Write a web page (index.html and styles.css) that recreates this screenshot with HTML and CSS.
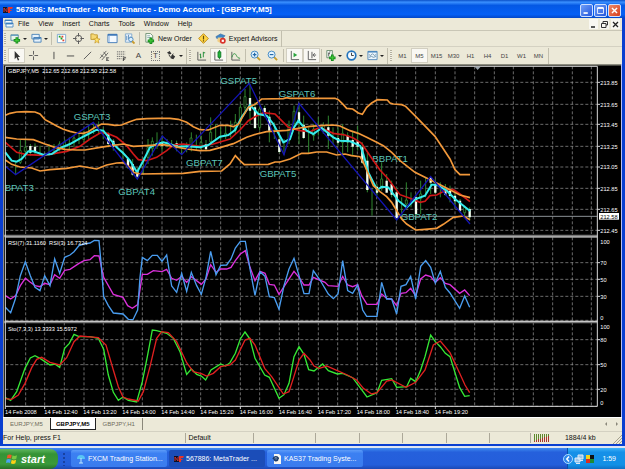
FILE: index.html
```html
<!DOCTYPE html>
<html lang="en">
<head>
<meta charset="utf-8">
<title>567886: MetaTrader - North Finance - Demo Account - [GBPJPY,M5]</title>
<link rel="stylesheet" href="styles.css">
</head>
<body>
<div class="window">
  <header class="titlebar">
    <svg class="logo" viewBox="0 0 10 8"><path d="M0 1h4l2 6H0z" fill="#101828"/><path d="M1 6V2l3 4V2" stroke="#c33" fill="none"/><path d="M5 1h5L9 3H7v1h2L8 5H7v2H5z" fill="#e8352a"/></svg>
    <h1>567886: MetaTrader - North Finance - Demo Account - [GBPJPY,M5]</h1>
    <div class="winbtns">
      <button aria-label="Minimize"><svg viewBox="0 0 13 13"><path d="M3 9.500h5" stroke="#fff" stroke-width="2"/></svg></button>
      <button aria-label="Maximize"><svg viewBox="0 0 13 13"><path d="M3 3.500h7V10H3z" stroke="#fff" fill="none"/><path d="M3 3.500h7" stroke="#fff" stroke-width="2"/></svg></button>
      <button class="close" aria-label="Close"><svg viewBox="0 0 13 13"><path d="M3.500 3.500l6 6m0-6l-6 6" stroke="#fff" stroke-width="1.700"/></svg></button>
    </div>
  </header>
  <div class="client">
    <nav class="menu">
      <svg class="doc" viewBox="0 0 10 10"><path d="M1 1h7v4H1z M2 4h7v4H2z" fill="#f4faff" stroke="#5b94c8"/><path d="M1 1.500h7M2 4.500h7" stroke="#3c7ec0"/></svg>
      <button>File</button><button>View</button><button>Insert</button><button>Charts</button><button>Tools</button><button>Window</button><button>Help</button>
      <div class="mdi">
        <button aria-label="Minimize chart"><svg viewBox="0 0 9 9"><path d="M2 7h4" stroke="#222" stroke-width="1.500"/></svg></button>
        <button aria-label="Restore chart"><svg viewBox="0 0 9 9"><path d="M3 3V1.500h4.500V5H6M1.500 3.500H6v4H1.500z" stroke="#333" fill="none"/></svg></button>
        <button aria-label="Close chart"><svg viewBox="0 0 9 9"><path d="M2 2l5 5m0-5L2 7" stroke="#222" stroke-width="1.300"/></svg></button>
      </div>
    </nav>
    <div class="toolbar first">
      <i class="grip"></i>
      <button class="dd" aria-label="New chart"><svg viewBox="0 0 12 12"><path d="M1 2h8v6H1z" fill="#e9f4ea" stroke="#5b8f9f"/><path d="M1 2.500h8" stroke="#4d8fc0"/><path d="M7.500 4.500v7M4 8h7" stroke="#168c1d" stroke-width="3"/><path d="M7.500 5.500v5M5 8h5" stroke="#46d13a"/></svg><b></b></button>
      <button class="dd" aria-label="Profiles"><svg viewBox="0 0 12 12"><path d="M1 1.500h8v5H1zM3 5h8v5H3z" fill="#e6f2fb" stroke="#4c84ba"/><path d="M3 5.500h8" stroke="#2d6fb0"/></svg><b></b></button>
      <i class="sep"></i>
      <button aria-label="Market watch"><svg viewBox="0 0 12 12"><path d="M1.500 1.500h9v9h-9z" fill="#fff" stroke="#7fa9cf"/><path d="M3 3h2v2H3zM5 5h2v2H5z" fill="#20a020"/><path d="M6 3h2v2H6zM7 7h2v2H7z" fill="#dc4a35"/></svg></button>
      <button aria-label="Data window"><svg viewBox="0 0 12 12"><circle cx="6" cy="6" r="3.500" fill="none" stroke="#555"/><path d="M6 0v4M6 8v4M0 6h4M8 6h4" stroke="#555"/></svg></button>
      <button aria-label="Navigator"><svg viewBox="0 0 12 12"><path d="M1 1h3l1 1h3v5H1z" fill="#f6d873" stroke="#c09a35"/><path d="M7.500 4l1 2.300 2.500.3-2 1.500.7 2.900-2.200-1.500L5.300 11 6 8.100l-2-1.500 2.500-.3z" fill="#ffe26a" stroke="#c29220" stroke-width=".7"/></svg></button>
      <button aria-label="Terminal"><svg viewBox="0 0 12 12"><path d="M1 1.500h10v9H1z" fill="#f4f9ff" stroke="#3f78b8"/><path d="M1 2h10" stroke="#3f78b8" stroke-width="2"/><path d="M2.500 3v7" stroke="#9bc0e8"/></svg></button>
      <button aria-label="Strategy tester"><svg viewBox="0 0 12 12"><path d="M1.500 1h7v9h-7z" fill="#f2f8ff" stroke="#7ca6cc"/><path d="M3 3v5M5 2v5M7 4v3" stroke="#5589b9"/><circle cx="7.500" cy="7" r="2.400" fill="#d9efff" stroke="#4d88bd"/><path d="M9 9l2.500 2.500" stroke="#c89a2c" stroke-width="2"/></svg></button>
      <i class="sep"></i>
      <button class="wide order"><svg viewBox="0 0 12 12"><path d="M2 .5h5l2.500 2.500v7H2z" fill="#f7faf7" stroke="#6f8f73"/><path d="M3.500 3h3M3.500 5h4" stroke="#8aa"/><path d="M7.500 5v7M4 8.500h7" stroke="#168c1d" stroke-width="3"/><path d="M7.500 6v5M5 8.500h5" stroke="#46d13a"/></svg>New Order</button>
      <button aria-label="Metaeditor"><svg viewBox="0 0 12 12"><path d="M6 .7L11.300 6 6 11.300.7 6z" fill="#ffd545" stroke="#bd8a13"/><path d="M6 3v4M6 8v1.300" stroke="#5f4a0c" stroke-width="1.300"/></svg></button>
      <button class="wide advisors"><svg viewBox="0 0 12 12"><path d="M1 4l5-3 5 2-3 3H2z" fill="#3d86c7" stroke="#2b5f9a" stroke-width=".6"/><path d="M3 5h5v4l-3 1.500L2.500 9z" fill="#f0cf86"/><circle cx="8.500" cy="8.500" r="3.200" fill="#d9322a"/><path d="M7.300 7.300h2.400v2.400H7.300z" fill="#fff"/></svg>Expert Advisors</button>
      <i class="sep end"></i>
    </div>
    <div class="toolbar">
      <i class="grip"></i>
      <button class="on" aria-label="Cursor"><svg viewBox="0 0 12 12"><path d="M4 1v9l2-2 1.500 3.500L9 11 7.500 7.500H10z" fill="#333"/></svg></button>
      <button aria-label="Crosshair"><svg viewBox="0 0 12 12"><path d="M6 1v4M6 7v4M1 6h4M7 6h4" stroke="#555"/></svg></button>
      <i class="sep clear"></i>
      <button aria-label="Vertical line"><svg viewBox="0 0 12 12"><path d="M6.500 2v8" stroke="#444"/></svg></button>
      <button aria-label="Horizontal line"><svg viewBox="0 0 12 12"><path d="M2 6.500h8" stroke="#444"/></svg></button>
      <button aria-label="Trendline"><svg viewBox="0 0 12 12"><path d="M2 10l8-8" stroke="#555"/></svg></button>
      <button aria-label="Equidistant channel"><svg viewBox="0 0 12 12"><path d="M1 9l7-8M3 11l7-8M2 5l3 3M5 2l3 4M8 8.500h3M8 10h2M8 11.500h3M8.500 8v4" stroke="#444" fill="none" stroke-width=".8"/></svg></button>
      <button aria-label="Fibonacci retracement"><svg viewBox="0 0 12 12"><path d="M1 2h9M1 4.500h9M1 7h9M1 9.500h5" stroke="#666" stroke-dasharray="1.500 .7"/><path d="M8 12V8.500h3M8 10h2" stroke="#333" fill="none"/></svg></button>
      <button class="glyph">A</button>
      <button class="glyph boxed" aria-label="Text label"><span>T</span></button>
      <button class="dd" aria-label="Arrows"><svg viewBox="0 0 12 12"><path d="M1 3l3-2 2 3-2 1zM7 5l3 2-2 3-3-1z" fill="#333"/><path d="M3 5l2 3 3-4" stroke="#333" fill="none"/></svg><b></b></button>
      <i class="sep end"></i><i class="grip"></i>
      <button aria-label="Bar chart"><svg viewBox="0 0 12 12"><path d="M2 2v9h9" stroke="#555" fill="none"/><path d="M5 4v5M8 2v6M4 5h1M8 3h2M5 8h1" stroke="#1e8a35"/></svg></button>
      <button class="on" aria-label="Candlesticks"><svg viewBox="0 0 12 12"><path d="M2 2v9h9" stroke="#555" fill="none"/><path d="M7 0v10" stroke="#107a25"/><path d="M5.500 2h3v6h-3z" fill="#22b838" stroke="#107a25"/></svg></button>
      <button aria-label="Line chart"><svg viewBox="0 0 12 12"><path d="M2 2v9h9" stroke="#555" fill="none"/><path d="M2 8c2-6 4-4 5-2s2 3 4 3" stroke="#2d913e" fill="none"/></svg></button>
      <i class="sep"></i>
      <button aria-label="Zoom in"><svg viewBox="0 0 12 12"><path d="M7.500 7.500l3.500 3.500" stroke="#c99d28" stroke-width="2"/><circle cx="5" cy="5" r="3.800" fill="#e3f4ff" stroke="#3b83c0"/><path d="M3 5h4M5 3v4" stroke="#2369a8" stroke-width="1.300"/></svg></button>
      <button aria-label="Zoom out"><svg viewBox="0 0 12 12"><path d="M7.500 7.500l3.500 3.500" stroke="#c99d28" stroke-width="2"/><circle cx="5" cy="5" r="3.800" fill="#e3f4ff" stroke="#3b83c0"/><path d="M3 5h4" stroke="#2369a8" stroke-width="1.300"/></svg></button>
      <i class="sep wider"></i>
      <button class="on" aria-label="Auto scroll"><svg viewBox="0 0 12 12"><path d="M2.500 1v9.500H11" stroke="#555" fill="none"/><path d="M5 3l4 2.500L5 8z" fill="#29a33c"/></svg></button>
      <button class="on" aria-label="Chart shift"><svg viewBox="0 0 12 12"><path d="M2.500 1v9.500H11M6.500 2v7M8 5.500h3M9.500 3.500L7.500 5.500l2 2" stroke="#555" fill="none"/></svg></button>
      <i class="sep"></i>
      <button class="dd" aria-label="Indicators"><svg viewBox="0 0 12 12"><path d="M2 .5h6v8H2z" fill="#f7faf7" stroke="#668a6c"/><path d="M6 2c-2 0-2 1-2 5M3.500 4h2" stroke="#555" fill="none"/><path d="M8 5v7M4.500 8.500h7" stroke="#168c1d" stroke-width="3"/><path d="M8 6v5M5.500 8.500h5" stroke="#46d13a"/></svg><b></b></button>
      <button class="dd" aria-label="Periods"><svg viewBox="0 0 12 12"><circle cx="6" cy="6" r="4.700" fill="#f5fbff" stroke="#2474bd" stroke-width="1.800"/><path d="M6 3v3h2.500" stroke="#333" fill="none"/></svg><b></b></button>
      <button class="dd" aria-label="Templates"><svg viewBox="0 0 12 12"><path d="M1 1.500h10v9H1z" fill="#edf6fd" stroke="#5288b8"/><path d="M1 2h10" stroke="#4584be" stroke-width="1.500"/><path d="M2 5l2 1 2-2 2 2 2-1M2 8l3-1 2 1 3-1" stroke="#6a91aa" fill="none"/></svg><b></b></button>
      <i class="sep end"></i><i class="grip"></i>
      <button class="period">M1</button><button class="period on">M5</button><button class="period">M15</button><button class="period">M30</button><button class="period">H1</button><button class="period">H4</button><button class="period">D1</button><button class="period">W1</button><button class="period">MN</button>
      <i class="sep end"></i>
    </div>

    <main class="chart">
      <!-- three drawing units per pixel -->
      <svg viewBox="12 192 1851 1059" role="img" aria-label="GBPJPY five minute chart">
        <g class="grid">
          <path d="M77 199V702M134 199V702M193 199V702M252 199V702M310 199V702M369 199V702M427 199V702M486 199V702M545 199V702M602 199V702M662 199V702M721 199V702M779 199V702M838 199V702M896 199V702M955 199V702M1013 199V702M1072 199V702M1130 199V702M1189 199V702M1247 199V702M1306 199V702M1365 199V702M1424 199V702M1483 199V702M1540 199V702M1600 199V702M1658 199V702M1717 199V702M1774 199V702"/>
          <path d="M77 712V1218M134 712V1218M193 712V1218M252 712V1218M310 712V1218M369 712V1218M427 712V1218M486 712V1218M545 712V1218M602 712V1218M662 712V1218M721 712V1218M779 712V1218M838 712V1218M896 712V1218M955 712V1218M1013 712V1218M1072 712V1218M1130 712V1218M1189 712V1218M1247 712V1218M1306 712V1218M1365 712V1218M1424 712V1218M1483 712V1218M1540 712V1218M1600 712V1218M1658 712V1218M1717 712V1218M1774 712V1218"/>
          <path d="M16 247H1792M16 313H1792M16 373H1792M16 439H1792M16 501H1792M16 565H1792M16 628H1792M16 691H1792M16 788H1792M16 838H1792M16 889H1792M16 961H1792M16 1019H1792M16 1094H1792M16 1168H1792M16 1219H1792"/>
        </g>
        <g transform="translate(0 192)">
          <path class="price" d="M16 457H1792"/>
          <g class="names">
            <text x="221" y="168">GSPAT3</text><text x="14" y="380">BPAT3</text><text x="355" y="392">GBPAT4</text><text x="558" y="305">GBPAT7</text><text x="661" y="59">GSPAT5</text><text x="836" y="99">GSPAT6</text><text x="779" y="338">GBPAT5</text><text x="1117" y="295">BBPAT1</text><text x="1202" y="467">GBPAT2</text>
          </g>
          <path class="wick" d="M47 290V330M61 228V300M76 225V275M91 240V275M105 238V272M120 245V275M147 240V275M162 240V272M179 232V262M194 225V262M208 220V255M222 212V250M237 205V240M252 200V235M266 180V225M281 178V210M296 172V210M310 190V225M325 205V250M340 225V260M369 255V285M384 280V315M398 285V335M412 310V345M430 280V332M444 225V300M457 220V275M471 205V255M486 215V262M501 225V250M515 228V250M530 230V262M545 240V272M560 235V265M574 205V262M589 212V260M604 215V260M618 228V262M632 160V240M647 180V230M662 190V235M677 185V225M692 170V220M706 150V210M721 120V190M735 75V140M750 60V180M765 115V195M779 130V200M794 125V160M808 140V235M823 175V225M838 210V266M852 225V272M867 170V240M882 125V190M897 120V240M911 155V225M926 190V270M941 180V230M955 160V215M970 175V210M985 155V255M999 190V240M1014 190V245M1028 180V275M1043 205V265M1058 200V275M1073 185V260M1087 235V300M1102 265V385M1116 375V455M1131 360V395M1145 295V380M1160 330V385M1175 350V400M1190 370V470M1205 400V450M1219 355V425M1233 385V430M1248 390V455M1262 350V450M1277 340V400M1292 345V390M1306 345V390M1321 355V400M1336 360V395M1350 365V415M1365 385V430M1380 405V445M1394 425V455M1409 430V470"/>
          <path class="bull" d="M58 260h6v35h-6zM73 250h6v12h-6zM175 240h6v12h-6zM190 234h6v16h-6zM219 222h6v14h-6zM248 212h6v14h-6zM441 250h6v30h-6zM454 232h6v22h-6zM570 222h6v26h-6zM600 235h6v16h-6zM629 205h6v28h-6zM674 208h6v8h-6zM703 175h6v24h-6zM718 130h6v42h-6zM732 98h6v32h-6zM776 135h6v55h-6zM864 185h6v45h-6zM879 142h6v36h-6zM938 195h6v20h-6zM967 185h6v16h-6zM1025 208h6v28h-6zM1142 345h6v26h-6zM1216 408h6v12h-6zM1259 390h6v14h-6zM1391 430h6v16h-6z"/>
          <path class="bear" d="M91 246V266M105 248V264M325 210V240M340 230V248M384 284V310M398 300V332M412 318V338M486 235V246M530 238V250M618 240V256M750 102V140M765 130V192M794 132V152M808 158V200M838 226V264M897 145V176M911 182V222M985 190V215M1014 222V236M1043 215V235M1058 228V248M1073 232V248M1087 250V296M1102 290V378M1131 368V386M1160 350V386M1175 360V392M1190 385V462M1248 400V450M1292 340V356M1306 362V386M1336 375V392M1350 380V396M1365 395V412M1380 410V440M1409 435V460"/>
          <path class="red" d="M16 235L50 265L80 272L130 274L200 262L240 247L270 225L300 207L320 207L350 220L380 245L400 270L415 287L440 290L470 280L500 260L520 243L550 240L600 247L640 240L690 225L720 198L745 170L765 158L790 146L825 150L845 170L865 190L900 200L930 203L960 190L1000 208L1035 213L1060 222L1085 238L1110 275L1140 318L1165 345L1185 373L1200 392L1230 403L1260 415L1275 412L1290 395L1310 393L1340 377L1360 377L1380 390L1410 413"/>
          <path class="cyan" d="M16 265L35 290L50 293L65 285L85 262L100 262L130 272L155 270L185 250L210 240L240 223L265 210L290 197L310 200L330 225L350 250L370 268L390 290L411 325L430 290L450 250L470 240L490 235L510 240L530 248L560 247L600 250L625 243L660 218L685 213L705 198L725 160L750 123L775 150L800 155L820 180L850 235L870 225L882 190L895 170L920 200L940 210L965 192L1000 220L1020 230L1050 232L1080 245L1090 270L1105 325L1120 355L1132 378L1145 368L1165 370L1180 390L1195 410L1220 430L1247 405L1275 395L1295 362L1310 362L1340 380L1365 405L1410 441"/>
          <path class="orange" d="M16 154L30 148L50 144L78 143L105 144L120 150L135 167L150 175L170 186L190 196L210 202L230 207L250 208L265 203L285 190L305 180L325 181L345 184L365 183L385 175L410 166L440 164L475 163L510 163L535 166L560 175L580 188L600 197L625 198L660 184L685 184L700 188L715 181L730 155L745 130L765 121L785 105L850 104L860 101L870 103L1005 103L1015 107L1030 122L1040 133L1058 135L1075 147L1087 151L1100 130L1115 117L1132 107L1162 108L1170 117L1180 120L1205 122L1217 127L1250 160L1305 217L1350 285L1365 317L1380 332L1410 332"/>
          <path class="orange" d="M16 220L50 225L100 227L135 240L165 250L195 256L230 258L255 258L300 250L340 244L370 240L400 247L440 245L490 242L520 247L560 255L600 260L630 259L660 251L700 239L740 220L770 210L800 203L860 199L900 192L930 187L960 185L1000 183L1020 186L1050 200L1075 208L1100 220L1130 235L1150 245L1175 265L1200 290L1245 325L1275 340L1310 357L1345 375L1380 393L1410 401"/>
          <path class="orange" d="M16 288L35 301L60 309L95 312L120 321L150 317L200 313L240 306L290 315L320 303L350 297L370 296L390 310L400 325L420 330L550 328L600 322L665 321L690 300L706 275L720 290L733 302L805 301L825 294L840 294L870 285L905 268L925 268L950 264L980 264L1010 273L1035 270L1055 275L1080 278L1090 295L1105 330L1120 365L1140 383L1160 398L1175 415L1190 440L1205 465L1220 480L1247 498L1275 496L1310 493L1330 481L1360 460L1390 456L1410 467"/>
          <path class="zigzag" d="M16 307L47 332L280 175L412 345L487 216L545 272L748 58L852 272L897 118L1190 468L1292 338L1410 480"/>
        </g>
        <g transform="translate(0 702)">
          <path class="magenta" d="M16 185L32 195L47 185L61 155L76 133L91 145L105 155L120 158L134 148L150 152L164 122L179 133L194 109L210 106L237 88L252 80L270 77L283 65L297 66L311 130L340 181L369 190L383 215L397 223L413 212L427 121L442 121L460 110L486 113L500 106L515 133L530 139L545 127L560 145L574 128L604 151L618 135L632 92L648 115L662 105L680 105L693 100L706 80L721 60L736 50L750 100L765 140L780 112L795 118L808 151L823 153L837 181L852 158L882 112L897 130L912 153L927 153L940 130L975 145L985 155L1014 157L1028 127L1043 153L1058 158L1073 152L1085 185L1101 211L1131 211L1145 180L1160 193L1175 195L1190 215L1203 178L1218 176L1232 163L1247 185L1262 135L1277 123L1292 128L1306 145L1321 131L1336 148L1350 152L1379 178L1394 168L1409 185"/>
          <path class="sky" d="M16 220L32 236L46 195L61 125L76 83L91 125L105 160L120 170L134 125L150 155L164 75L179 118L194 70L210 63L222 53L237 35L252 30L270 27L283 19L297 20L303 85L311 188L325 215L340 237L369 240L385 256L399 257L413 228L420 130L427 70L442 80L457 64L472 64L486 82L500 63L515 156L530 175L545 118L560 172L574 115L590 155L604 181L618 130L632 52L648 122L662 94L680 93L693 75L706 42L721 22L736 22L750 105L765 184L780 113L795 127L808 188L823 191L837 226L852 155L867 105L882 73L897 125L912 179L927 179L940 110L960 138L985 180L1000 194L1014 180L1028 80L1043 170L1058 178L1073 153L1088 228L1100 247L1131 247L1145 145L1160 195L1175 195L1190 240L1203 157L1218 152L1232 127L1247 195L1262 97L1277 80L1292 100L1306 147L1321 112L1336 160L1350 177L1379 223L1394 186L1409 220"/>
        </g>
        <g transform="translate(0 960)">
          <path class="lime" d="M16 233L32 241L50 215L75 145L91 114L105 107L120 115L150 135L165 132L179 142L194 85L208 70L222 43L237 50L270 50L295 55L311 88L325 165L340 217L355 241L369 231L385 241L410 246L427 185L442 110L457 30L470 32L500 40L520 55L540 95L560 163L574 147L590 163L604 168L617 180L633 150L662 132L677 138L690 128L706 100L721 57L735 36L750 57L765 115L794 165L808 172L837 235L852 224L867 190L882 110L897 80L912 103L926 149L942 153L968 132L985 152L1012 162L1028 160L1058 173L1101 231L1131 218L1145 181L1175 176L1190 202L1220 200L1232 175L1247 185L1262 150L1275 110L1292 45L1306 65L1321 80L1336 100L1350 110L1379 203L1394 229L1409 227"/>
          <path class="signal" d="M16 236L35 238L55 225L75 190L95 143L110 118L125 112L150 127L179 135L200 113L222 65L240 48L295 53L318 75L340 150L355 200L369 231L385 237L415 243L430 215L450 140L470 55L485 35L505 38L530 65L560 128L580 155L604 161L620 168L640 160L662 140L690 135L706 120L735 60L750 55L765 75L794 145L815 170L850 222L867 215L880 175L897 120L912 100L930 120L942 138L958 145L980 138L1012 152L1042 165L1070 180L1090 205L1115 222L1131 218L1160 183L1175 180L1218 202L1247 187L1275 150L1300 75L1321 63L1350 98L1379 160L1395 195L1409 218"/>
        </g>
        <g class="frame">
          <path class="edge" d="M12 194H1863"/>
          <path class="divider" d="M12 708H1792M12 966H1792"/>
          <path d="M16 1219V199H1792V1219M16 1219H1792M16 711H1792M16 964H1792"/>
          <path d="M1792 247h8M1792 313h8M1792 373h8M1792 439h8M1792 501h8M1792 565h8M1792 628h8M1792 691h8M1792 788h8M1792 838h8M1792 889h8M1792 1019h8M1792 1094h8M1792 1168h8M16 1219v8M134 1219v8M252 1219v8M369 1219v8M486 1219v8M602 1219v8M721 1219v8M838 1219v8M955 1219v8M1072 1219v8M1189 1219v8M1306 1219v8"/>
        </g>
        <path class="marker" d="M1424 200h18l-9 10z"/>
        <g class="labels">
          <text x="24" y="220">GBPJPY,M5&#160; 212.65 212.68 212.50 212.58</text>
          <text x="24" y="736">RSI(7) 31.1160&#160; RSI(3) 16.7324</text>
          <text x="24" y="993">Sto(7,3,3) 13.3333 15.5972</text>
          <text x="1801" y="254">213.85</text><text x="1801" y="320">213.65</text><text x="1801" y="380">213.45</text><text x="1801" y="446">213.25</text><text x="1801" y="508">213.05</text><text x="1801" y="572">212.85</text><text x="1801" y="635">212.65</text><text x="1801" y="698">212.45</text>
          <rect x="1797" y="639" width="60" height="20" fill="#fff"/><text class="now" x="1801" y="656">212.58</text>
          <text x="1801" y="732">100</text><text x="1801" y="795">70</text><text x="1801" y="845">50</text><text x="1801" y="896">30</text><text x="1801" y="959">0</text>
          <text x="1801" y="988">100</text><text x="1801" y="1026">80</text><text x="1801" y="1101">50</text><text x="1801" y="1175">20</text><text x="1801" y="1214">0</text>
          <text x="15" y="1243">14 Feb 2008</text><text x="133" y="1243">14 Feb 12:40</text><text x="250" y="1243">14 Feb 13:20</text><text x="367" y="1243">14 Feb 14:00</text><text x="484" y="1243">14 Feb 14:40</text><text x="601" y="1243">14 Feb 15:20</text><text x="719" y="1243">14 Feb 16:00</text><text x="836" y="1243">14 Feb 16:40</text><text x="953" y="1243">14 Feb 17:20</text><text x="1070" y="1243">14 Feb 18:00</text><text x="1187" y="1243">14 Feb 18:40</text><text x="1304" y="1243">14 Feb 19:20</text>
        </g>
      </svg>
    </main>

    <div class="tabs">
      <button>EURJPY,M5</button><button class="active">GBPJPY,M5</button><button class="last">GBPJPY,H1</button>
      <div class="scroll"><button aria-label="Scroll tabs left"><svg viewBox="0 0 4 6"><path d="M3 1v4L1 3z" fill="#8a877a"/></svg></button><button aria-label="Scroll tabs right"><svg viewBox="0 0 4 6"><path d="M1 1v4l2-2z" fill="#8a877a"/></svg></button></div>
    </div>
    <footer class="status">
      <span class="help">For Help, press F1</span><span class="profile">Default</span><span class="c1"></span><span class="c2"></span><span class="c2"></span><span class="c2"></span><span class="c2"></span><span class="c3"></span>
      <span class="traffic"><svg viewBox="0 0 16 8"><path d="M.5 0v8M2.500 0v8M4.500 0v8M6.500 0v8M8.500 0v8M10.500 0v8M12.500 0v8M14.500 0v8" stroke="#5d8a2c"/><path d="M.5 7v1M2.500 6v2M4.500 5v3M6.500 5v3M8.500 4v4M10.500 3v5M12.500 3v5M14.500 2v6" stroke="#a8322a"/></svg>1884/4 kb</span>
      <svg class="sizer" viewBox="0 0 9 9"><path d="M0 9l9-9M3 9l6-6M6 9l3-3" stroke="#a5a18e"/></svg>
    </footer>
  </div>
</div>
<div class="taskbar">
  <button class="start"><svg viewBox="0 0 12 12"><path d="M1.500 2Q3.500.8 5.700 2L5 5.500Q3 4.500.8 5.500z" fill="#f0562a"/><path d="M6.500 2.300Q8.500 3.500 11 2.200L10.300 5.700Q8 7 5.800 5.800z" fill="#7ac943"/><path d="M.6 6.500Q2.800 5.400 4.900 6.500L4.100 10Q2 9 0 10z" fill="#4aa3f0"/><path d="M5.700 6.800Q7.700 8 10.100 6.700L9.400 10.200Q7 11.500 4.900 10.300z" fill="#fcd116"/></svg>start</button>
  <i class="dots"></i>
  <button class="task"><svg viewBox="0 0 10 10"><path d="M1 5Q1 1 5 1t4 4z" fill="#58c4f4"/><path d="M5 4v5M3 9h4" stroke="#bfe9ff"/></svg>FXCM Trading Station...</button>
  <button class="task current"><svg viewBox="0 0 10 10"><path d="M0 2h4l2 6H0z" fill="#0a1024"/><path d="M1 7V3l3 4V3" stroke="#c33" fill="none"/><path d="M5 2h5L9 4H7v1h2L8 6H7v2H5z" fill="#e8352a"/></svg>567886: MetaTrader ...</button>
  <button class="task"><svg viewBox="0 0 10 10"><path d="M2 0h5l2 2v8H2z" fill="#f6f6f0"/><path d="M1 5q1-3 4-2 2 1 1 2H2q1 3 4 1" stroke="#183a6b" stroke-width="1.400" fill="none"/></svg>KAS37 Trading Syste...</button>
  <div class="tray">
    <svg class="chev" viewBox="0 0 10 10"><circle cx="5" cy="5" r="4.500" fill="#2d86ea" stroke="#a9dcff"/><path d="M6 2.500L3.800 5 6 7.500" stroke="#fff" stroke-width="1.500" fill="none"/></svg>
    <svg viewBox="0 0 10 10"><path d="M4 1h5v4H4zM1 4h5v4H1z" fill="#9cc4ea" stroke="#e0edf8"/><path d="M2 9.500h4M6 6.500h3" stroke="#dce8f4"/></svg>
    <svg viewBox="0 0 10 10"><path d="M1 1h4v4H1z" fill="#f5d21c"/><path d="M5 1h4v4H5z" fill="#111"/><path d="M1 5h4v4H1z" fill="#db2d20"/><path d="M5 5h4v4H5z" fill="#1d8b33"/></svg>
    <time>1:59</time>
  </div>
</div>
</body>
</html>
```
FILE: styles.css
```css
* { box-sizing: border-box; }
body {
  margin: 0;
  min-height: 100vh;
  display: flex;
  flex-direction: column;
  background: #fff;
  font: 7px/10px "Liberation Sans", Arial, sans-serif;
  color: #111;
}
button { font: inherit; color: inherit; background: none; border: 0; padding: 0; margin: 0; white-space: nowrap; }
svg { display: block; flex: none; }

.window { flex: 1; display: flex; flex-direction: column; background: #0a3fd0; padding-bottom: 2px; }
.titlebar {
  height: 18px;
  display: flex;
  align-items: center;
  gap: 3px;
  padding: 2px 4px 0 3px;
  background: linear-gradient(#0a50c8, #3a90ff 12%, #0458e4 30%, #0560f6 80%, #0347c8);
}
.logo { width: 10px; height: 8px; }
.titlebar h1 { flex: 1; margin: 0; font: bold 8px/12px "Liberation Sans", Arial, sans-serif; color: #fff; white-space: nowrap; }
.winbtns { display: flex; gap: 1px; }
.winbtns button { width: 13px; height: 13px; border: 1px solid #cfe0ff; border-radius: 2px; background: linear-gradient(135deg, #6f9ff8, #2356dc); }
.winbtns .close { background: linear-gradient(135deg, #ee8a68, #d63f1c); }
.winbtns svg { width: 11px; height: 11px; }

.client { flex: 1; display: flex; flex-direction: column; margin: 0 3px; background: #ece9d8; }
.menu { height: 13px; display: flex; align-items: center; gap: 9px; padding: 0 2px 0 1px; border-bottom: 1px solid #c9c6b6; }
.doc { width: 10px; height: 10px; margin-right: -5px; }
.mdi { margin-left: auto; display: flex; gap: 2px; }
.mdi button { width: 9px; height: 10px; background: #f8f7f1; }
.mdi svg { width: 9px; height: 9px; }

.toolbar { height: 17px; display: flex; align-items: center; color: #444; }
.toolbar.first { height: 16px; color: #111; border-bottom: 1px solid #d4d1c2; }
.toolbar button { width: 17px; height: 15px; flex: none; display: flex; align-items: center; justify-content: center; }
.toolbar svg { width: 11px; height: 11px; }
.toolbar .dd { width: 21px; gap: 2px; }
.dd b { border: 2px solid transparent; border-top-color: #222; border-bottom: 0; }
.toolbar .on { background: #f9f8f3; border: 1px solid #d2cfc1; }
.toolbar .wide { width: auto; gap: 3px; padding: 0 3px; }
.grip { width: 2px; height: 11px; margin: 0 2px 0 1px; background: repeating-linear-gradient(#b3af9e 0 1px, #f4f2e8 1px 2px); }
.sep { width: 1px; height: 13px; margin: 0 1px; background: #c2bfae; }
.sep.clear { background: none; }
.sep.wider { margin: 0 2px; }
.sep.end { height: 16px; margin: 0 1px; }
.glyph { font-size: 8px; }
.boxed span { line-height: 8px; padding: 0 1px; border: 1px dotted #777; }
.period { font-size: 6px; }

.chart { flex: 1; background: #000; border-left: 1px solid #8d8d86; border-right: 1px solid #b9bff0; }
.chart svg { width: 100%; height: auto; }
.chart path { fill: none; stroke-width: 3; }
.chart .grid { stroke: #a0a0a0; stroke-dasharray: 9 6; }
.chart .grid path { stroke-width: 2; }
.chart .frame { stroke: #d8d8d8; }
.chart .edge { stroke: #8d8d80; stroke-width: 5; }
.chart .divider { stroke: #777; stroke-width: 7; }
.chart .price { stroke: #8b9196; }
.chart .wick { stroke: #2f852f; }
.chart .bull { fill: #000; stroke: #3fa43f; stroke-width: 2; }
.chart .bear { stroke: #f4fff0; stroke-width: 7; }
.chart .zigzag { stroke: #1414b4; stroke-width: 4; }
.chart .red { stroke: #d01818; stroke-width: 5; }
.chart .cyan { stroke: #35ecec; stroke-width: 6; }
.chart .orange { stroke: #f2983a; stroke-width: 5; }
.chart .magenta { stroke: #dc30dc; stroke-width: 4; }
.chart .sky { stroke: #4a9df0; stroke-width: 4; }
.chart .lime { stroke: #35e835; stroke-width: 4; }
.chart .signal { stroke: #e02020; stroke-width: 4; }
.chart .marker { fill: #9aa4ac; }
.names { fill: #5cc4b8; font-size: 29px; }
.labels { fill: #fff; font-size: 17px; }
.labels .now { fill: #000; }

.tabs { height: 14px; display: flex; align-items: flex-start; border-top: 1px solid #fff; color: #6f6c5c; font-size: 6px; }
.tabs > button { height: 12px; padding: 0 7px; }
.tabs .active { background: #fff; color: #000; font-weight: bold; border: 1px solid #222; border-top: 0; padding: 0 5px; }
.tabs .last { border-right: 1px solid #8a877a; }
.scroll { margin-left: auto; display: flex; gap: 7px; padding: 3px 3px 0; }
.scroll svg { width: 4px; height: 6px; }

.status { height: 13px; display: flex; align-items: center; border-top: 1px solid #d4d1c2; }
.status span { height: 10px; border-left: 1px solid #aca899; padding-left: 3px; }
.status .help { flex: 179; border: 0; padding: 0; }
.status .profile { flex: 64; }
.status .c1 { flex: 57; }
.status .c2 { flex: 39; }
.status .c3 { flex: 36; }
.status .traffic { flex: 78; display: flex; align-items: center; gap: 15px; }
.traffic svg { width: 16px; height: 8px; }
.sizer { width: 9px; height: 9px; align-self: flex-end; }

.taskbar {
  height: 23px;
  display: flex;
  align-items: center;
  border-top: 2px solid #dfe6f4;
  background: linear-gradient(#3f8cf0, #2560dc 20%, #245edb 80%, #1c48b4);
  color: #fff;
}
.taskbar .start {
  width: 58px;
  height: 20px;
  display: flex;
  align-items: center;
  gap: 3px;
  padding-left: 6px;
  border-radius: 0 8px 8px 0;
  background: linear-gradient(#5fb75f, #359335 25%, #3a9a3a 75%, #276f27);
  font: italic bold 11px/18px "Liberation Sans", Arial, sans-serif;
}
.start svg { width: 12px; height: 12px; }
.dots { width: 4px; height: 14px; margin: 0 5px 0 4px; background: radial-gradient(circle, #1841a0 1px, transparent 1px) 0 0 / 4px 4px; }
.task { flex: 0 1 96px; height: 17px; display: flex; align-items: center; gap: 2px; margin-right: 2px; padding-left: 5px; border-radius: 2px; background: linear-gradient(#5c9bf8, #3c80f2 20%, #3a7cee); overflow: hidden; }
.task.current { background: #1b4db8; }
.task svg { width: 10px; height: 10px; }
.tray { margin-left: auto; align-self: stretch; display: flex; align-items: center; gap: 1px; padding-right: 9px; background: linear-gradient(#3fb4f8, #1690e8 20%, #1290e6 80%, #0f70c4); border-left: 1px solid #0a4fa8; }
.tray svg { width: 10px; height: 10px; }
.tray .chev { margin-left: -5px; }
.tray time { margin-left: 6px; }
```
